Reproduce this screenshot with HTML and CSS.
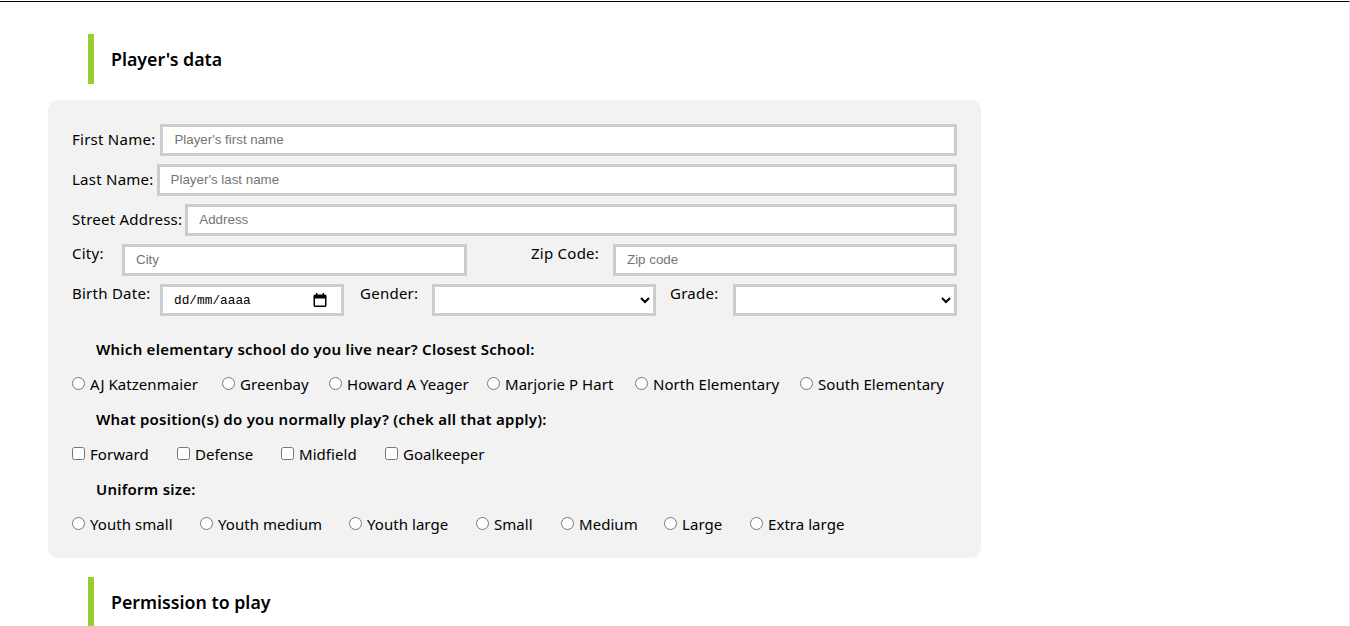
FILE: index.html
```html
<!DOCTYPE html>
<html>
<head>
<meta name="viewport" content="width=device-width, initial-scale=1">
<link rel="stylesheet" href="styles.css">
</head>
<body>

<div class="page">

  <h3 class="section-title">Player's data</h3>

  <form class="panel">
    <div class="row">
      <label class="first-label">First Name:</label>
      <input class="grow" type="text" placeholder="Player's first name">
    </div>
    <div class="row">
      <label>Last Name:</label>
      <input class="grow" type="text" placeholder="Player's last name">
    </div>
    <div class="row">
      <label>Street Address:</label>
      <input class="grow" type="text" placeholder="Address">
    </div>

    <div class="row row-top">
      <label class="city-label">City:</label>
      <input class="city-input" type="text" placeholder="City">
      <label class="zip-label">Zip Code:</label>
      <input class="grow" type="text" placeholder="Zip code">
    </div>

    <div class="row row-top">
      <label class="birth-label">Birth Date:</label>
      <div class="date-field">
        <span>dd/mm/aaaa</span>
        <svg width="16" height="16" viewBox="0 0 16 16"><path d="M4 1v1.5H3A1.5 1.5 0 0 0 1.5 4v9.5A1.5 1.5 0 0 0 3 15h10a1.5 1.5 0 0 0 1.5-1.5V4A1.5 1.5 0 0 0 13 2.5h-1V1h-1.5v1.5h-5V1H4zM3 6.5h10v7H3v-7z" fill="#000"/></svg>
      </div>
      <label class="gender-label">Gender:</label>
      <select class="gender-select"><option></option></select>
      <label class="grade-label">Grade:</label>
      <select class="grow"><option></option></select>
    </div>

    <p class="question first">Which elementary school do you live near? Closest School:</p>
    <div class="choices schools">
      <label><input type="radio" name="school">AJ Katzenmaier</label>
      <label><input type="radio" name="school">Greenbay</label>
      <label><input type="radio" name="school">Howard A Yeager</label>
      <label><input type="radio" name="school">Marjorie P Hart</label>
      <label><input type="radio" name="school">North Elementary</label>
      <label><input type="radio" name="school">South Elementary</label>
    </div>

    <p class="question">What position(s) do you normally play? (chek all that apply):</p>
    <div class="choices positions">
      <label><input type="checkbox">Forward</label>
      <label><input type="checkbox">Defense</label>
      <label><input type="checkbox">Midfield</label>
      <label><input type="checkbox">Goalkeeper</label>
    </div>

    <p class="question">Uniform size:</p>
    <div class="choices sizes">
      <label><input type="radio" name="size">Youth small</label>
      <label><input type="radio" name="size">Youth medium</label>
      <label><input type="radio" name="size">Youth large</label>
      <label><input type="radio" name="size">Small</label>
      <label><input type="radio" name="size">Medium</label>
      <label><input type="radio" name="size">Large</label>
      <label><input type="radio" name="size">Extra large</label>
    </div>
  </form>

  <h3 class="section-title second">Permission to play</h3>

</div>

</body>
</html>
```

FILE: styles.css
```css
html, body {
  margin: 0;
  height: 626px;
  overflow: hidden;
  background: #fff;
}

body {
  padding-top: 1px;
}

* {
  box-sizing: border-box;
  font-family: "Noto Sans", sans-serif;
}

/* thin line on top, and the sliver of scrollbar on the right */
.page {
  height: 625px;
  border-top: 1px solid #000;
  border-right: 1px solid #f1f1f1;
  padding: 32px 0 0 48px;
}

/* Section headings with the green bar */
.section-title {
  margin: 0 0 16px 40px;
  height: 50px;
  line-height: 50px;
  border-left: 6px solid yellowgreen;
  padding-left: 17px;
  font-size: 17.75px;
  font-weight: 600;
  color: #000;
}

.section-title.second {
  margin-top: 19px;
}

/* The grey form box */
.panel {
  width: 933px;
  height: 458px;
  background: #f2f2f2;
  border-radius: 10px;
  padding: 24px 24px 0 24px;
  font-size: 15px;
  letter-spacing: 0.25px;
}

.row {
  display: flex;
  align-items: center;
  height: 32px;
  margin-bottom: 8px;
}

.row-top {
  align-items: flex-start;
}

.row label {
  font-size: 15px;
  color: #000;
  margin-right: 3px;
  padding-bottom: 2px;
  white-space: nowrap;
}

.row .first-label {
  margin-right: 5px;
}

.row-top label {
  line-height: 18px;
  padding-bottom: 0;
}

.row input, .row select, .date-field {
  height: 32px;
  border: 3px solid #ccc;
  background: #fff;
  border-radius: 0;
  padding: 0 10px 2px 11px;
  font-size: 13.33px;
  letter-spacing: normal;
  font-family: "Liberation Sans", sans-serif;
  outline: none;
}

.row select {
  padding: 0;
}

.row input::placeholder {
  color: #757575;
  font-family: "Liberation Sans", sans-serif;
}

.grow {
  flex: 1;
  min-width: 0;
}

.row .city-label { width: 50px; margin-right: 0; }
.city-input { width: 345px; }
.row .zip-label { width: 82px; margin: 0 0 0 64px; }
.row .birth-label { width: 88px; margin-right: 0; }
.row .gender-label { width: 72px; margin: 0 0 0 16px; }
.gender-select { width: 224px; }
.row .grade-label { width: 63px; margin: 0 0 0 14px; }

.row .date-field {
  width: 184px;
  display: flex;
  align-items: center;
  justify-content: space-between;
  padding: 0 13px 0 11px;
}

.date-field span {
  font-family: "Liberation Mono", monospace;
  font-size: 12.8px;
}

.question {
  margin: 0;
  height: 35px;
  line-height: 37px;
  padding-left: 24px;
  font-size: 15px;
  font-weight: 600;
  color: #000;
}

.question.first {
  margin-top: 15px;
}

/* Radio and checkbox rows */
.choices {
  display: grid;
  height: 35px;
  align-items: center;
  letter-spacing: 0.05px;
}

.schools {
  grid-template-columns: 150px 107px 158px 148px 165px auto;
}

.positions {
  grid-template-columns: 105px 104px 104px auto;
}

.sizes {
  grid-template-columns: 128px 149px 127px 85px 103px 86px auto;
}

.choices label {
  display: flex;
  align-items: center;
  font-size: 15px;
  color: #000;
  white-space: nowrap;
}

.choices input {
  margin: 0 5px 0 0;
}
```
